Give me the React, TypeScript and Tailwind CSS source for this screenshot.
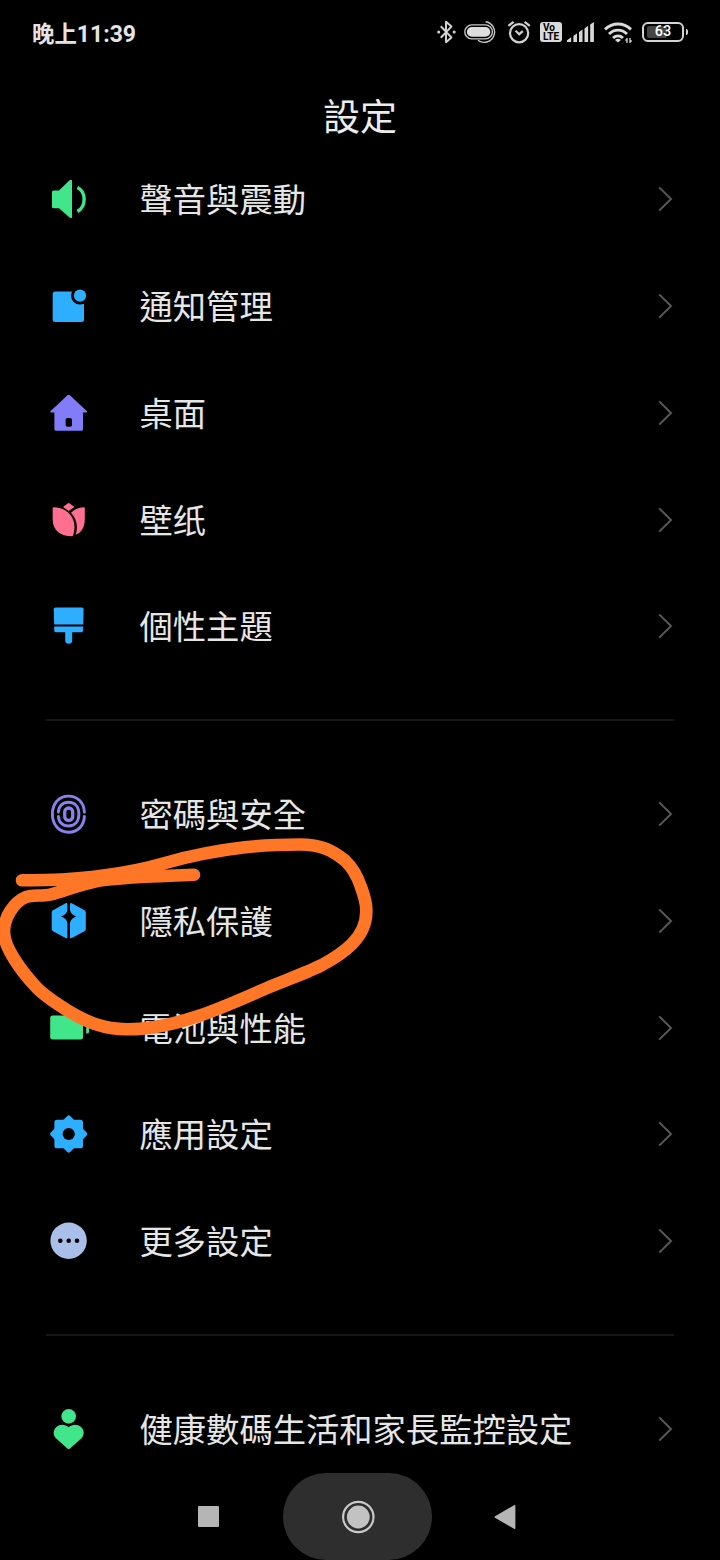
import type { ReactNode } from 'react';

interface SettingItem {
  id: string;
  label: string;
  icon: ReactNode;
}

const GREEN = '#41e58a';
const BLUE = '#2eaeff';
const PURPLE = '#837cf8';

function Icon({ children }: { children: ReactNode }) {
  return (
    <svg viewBox="0 0 44 44" className="w-11 h-11 shrink-0" fill="none" aria-hidden="true">
      {children}
    </svg>
  );
}

const groups: SettingItem[][] = [
  [
    {
      id: 'sound',
      label: '聲音與震動',
      icon: (
        <Icon>
          <path d="M7.5 13.6H13L23.6 3.3Q26 1.7 26 4.1V39.7Q26 42.3 23.6 40.5L13 31.2H7.5Q6 31.2 6 29.7V15.1Q6 13.6 7.5 13.6Z" fill={GREEN} />
          <path d="M31.4 10.5C40.4 14.9 40.4 29.7 31.4 34.5" stroke={GREEN} strokeWidth="3.4" />
        </Icon>
      ),
    },
    {
      id: 'notification',
      label: '通知管理',
      icon: (
        <Icon>
          <rect x="6.7" y="7.6" width="31.3" height="30.4" rx="2.5" fill={BLUE} />
          <circle cx="34" cy="11.6" r="9" fill="#000" />
          <circle cx="34" cy="11.6" r="6.1" fill={BLUE} />
        </Icon>
      ),
    },
    {
      id: 'home',
      label: '桌面',
      icon: (
        <Icon>
          <path d="M21.5 4.2Q22.7 3.2 23.9 4.2L41 20.3Q41.6 21.4 40.4 21.5H37V38.2Q37 39.8 35.4 39.8H10Q8.4 39.8 8.4 38.2V21.5H5Q3.8 21.4 4.4 20.3Z" fill={PURPLE} />
          <rect x="19.6" y="27" width="6.4" height="8.7" rx="1.8" fill="#000" />
        </Icon>
      ),
    },
    {
      id: 'wallpaper',
      label: '壁纸',
      icon: (
        <Icon>
          <g fill="#ff6f8f">
            <path d="M22 5.2Q22.7 4.8 23.4 5.2L27.8 8.4Q28.2 9 27.6 9.5L22.7 13L17.8 9.5Q17.2 9 17.6 8.4Z" />
            <path d="M7.6 9.2C18 9.2 28.5 16.5 28.5 29Q28.5 33 27.2 37.2Q26.8 38.3 25.8 38.3C14.5 38.3 6.7 32 6.7 22V10.2Q6.7 9.2 7.6 9.2Z" />
            <path d="M38 9.2Q38.8 9.2 38.8 10.2V21C38.8 28.5 36 34.5 29.7 36.8C32.4 28.5 30.5 20.5 25 14.8C28.5 11.3 33 9.5 38 9.2Z" />
          </g>
        </Icon>
      ),
    },
    {
      id: 'theme',
      label: '個性主題',
      icon: (
        <Icon>
          <g fill={BLUE}>
            <path d="M9.5 3.5H35.8Q37.6 3.5 37.6 5.3L37.2 20.6H8.2L7.7 5.3Q7.7 3.5 9.5 3.5Z" />
            <path d="M8.2 22.6H37.1V26.6Q37.1 28.2 35.5 28.2H26.2V36.2A3.5 3.5 0 0 1 19.2 36.2V28.2H9.8Q8.2 28.2 8.2 26.6Z" />
          </g>
        </Icon>
      ),
    },
  ],
  [
    {
      id: 'security',
      label: '密碼與安全',
      icon: (
        <Icon>
          <g stroke="#8a80ee" strokeWidth="2.9" strokeLinecap="round">
            <path d="M38.4 20.2C38 10.5 31.5 4.1 22.6 4.1C13.2 4.1 6.4 11.2 6.4 22.1C6.4 33 13.2 40.2 22.6 40.2C31.5 40.2 38 34 38.4 24.4" />
            <path d="M12.4 20.2C12.8 14 16.6 10.2 22.6 10.2C28.8 10.2 32.9 14.6 32.9 22.1C32.9 29.6 28.8 34 22.6 34C16.6 34 12.8 30.4 12.4 24.4" />
            <rect x="18.7" y="16" width="8" height="12.4" rx="4" strokeWidth="3.3" />
          </g>
        </Icon>
      ),
    },
    {
      id: 'privacy',
      label: '隱私保護',
      icon: (
        <Icon>
          <g fill={BLUE}>
            <path d="M19.6 4.3Q21.4 3.6 21.4 5.4V11.5Q20 16 15 17.6Q20 19.2 21.4 23.8V38Q21.4 40 19.6 39.1L7 32.2Q5.7 31.4 5.7 30V13.4Q5.7 12 7 11.2Z" />
            <path d="M25.8 4.3Q24 3.6 24 5.4V11.5Q25.4 16 30.4 17.6Q25.4 19.2 24 23.8V38Q24 40 25.8 39.1L38.5 32.2Q39.8 31.4 39.8 30V13.4Q39.8 12 38.5 11.2Z" />
          </g>
        </Icon>
      ),
    },
    {
      id: 'battery',
      label: '電池與性能',
      icon: (
        <Icon>
          <rect x="4.2" y="9.6" width="32.8" height="24" rx="2.4" fill={GREEN} />
          <path d="M40.2 17.3H41.4Q43 17.3 43 18.8V25.8Q43 27.4 41.4 27.4H40.2Z" fill={GREEN} />
        </Icon>
      ),
    },
    {
      id: 'apps',
      label: '應用設定',
      icon: (
        <Icon>
          <g fill={BLUE}>
            <rect x="8.4" y="7.7" width="28.6" height="28.6" rx="2.6" />
            <rect x="9" y="8.3" width="27.4" height="27.4" rx="2" transform="rotate(45 22.7 22)" />
          </g>
          <circle cx="22.7" cy="22" r="6.1" fill="#000" />
        </Icon>
      ),
    },
    {
      id: 'more',
      label: '更多設定',
      icon: (
        <Icon>
          <circle cx="22.6" cy="21.7" r="18.2" fill="#a9bfe9" />
          <g fill="#000">
            <circle cx="14.3" cy="21.8" r="2.3" />
            <circle cx="22.7" cy="21.8" r="2.3" />
            <circle cx="31" cy="21.8" r="2.3" />
          </g>
        </Icon>
      ),
    },
  ],
  [
    {
      id: 'wellbeing',
      label: '健康數碼生活和家長監控設定',
      icon: (
        <Icon>
          <g fill={GREEN}>
            <circle cx="22.7" cy="9.4" r="7.3" />
            <path d="M22.7 20.2C19.4 17 13.8 16.8 10.4 20C6.8 23.4 6.9 28.2 10.2 31.6L21.4 41.4Q22.7 42.4 24 41.4L35.2 31.6C38.5 28.2 38.6 23.4 35 20C31.6 16.8 26 17 22.7 20.2Z" />
          </g>
        </Icon>
      ),
    },
  ],
];

function StatusBar() {
  return (
    <div className="h-16 shrink-0 flex items-center justify-between px-8 text-[#e4e4e4]">
      <span className="pt-1 font-['Roboto','Noto_Sans_CJK_TC',sans-serif] font-bold text-[23px] leading-none whitespace-nowrap">
        <span className="text-[22.4px]">晚上</span>11:39
      </span>

      <div className="flex items-center" aria-hidden="true">
        {/* Bluetooth */}
        <svg viewBox="0 0 19 24" className="w-[19px] h-6 mr-2" fill="none">
          <path d="M3.8 6.2L14.4 17.4L9 22.2V1.8L14.4 6.6L3.8 17.8" stroke="#d2d2d2" strokeWidth="2" strokeLinejoin="round" />
          <circle cx="1.7" cy="12" r="1.5" fill="#d2d2d2" />
          <circle cx="17.2" cy="12" r="1.5" fill="#d2d2d2" />
        </svg>
        {/* Wearable capsule */}
        <svg viewBox="0 0 33 24" className="w-[33px] h-6 mr-[10px]" fill="none">
          <path d="M21.6 1.8A10.3 10.3 0 1 1 14 20.2" stroke="#c8c8c8" strokeWidth="1.4" />
          <rect x="0.8" y="4.9" width="27.6" height="14" rx="7" fill="#000" stroke="#c8c8c8" strokeWidth="1.4" />
          <rect x="2.9" y="7" width="23.4" height="9.8" rx="4.9" fill="#dedede" />
        </svg>
        {/* Alarm */}
        <svg viewBox="0 0 24 24" className="w-6 h-6 mr-[9px]" fill="none" stroke="#d2d2d2" strokeWidth="2.2">
          <circle cx="12.1" cy="13.2" r="9.1" />
          <path d="M8.6 10.8L12.2 14.2L15.8 11.2" />
          <path d="M1.4 5.8L6.6 1.8M17.6 1.8L22.8 5.8" />
        </svg>
        {/* VoLTE */}
        <div className="w-[22px] h-5 mr-[5px] rounded-[3px] bg-[#dadada] text-black font-['Roboto',sans-serif] font-bold text-[10px] leading-[9px] pt-px pl-[3px]">
          <div>Vo</div>
          <div>LTE</div>
        </div>
        {/* Signal */}
        <svg viewBox="0 0 27 24" className="w-[27px] h-6 mr-[10px]" fill="#d8d8d8">
          <path d="M0 22V20.2L4.2 17.2V22ZM6.4 22V15.8L10 13.4V22ZM12 22V12L15.5 9.6V22ZM17.5 22V8.4L21.1 5.8V22ZM23.2 22V4.6L26.9 2V22Z" />
        </svg>
        {/* Wifi */}
        <svg viewBox="0 0 29 24" className="w-[29px] h-6 mr-[9px]" fill="none" stroke="#dadada" strokeWidth="2.9">
          <path d="M1 9.4C8.6 2.2 19.4 2.2 27 9.4M5 14C10.4 8.8 17.6 8.8 23 14M9 18C12 15.2 16 15.2 19 18" />
          <path d="M11 20Q14 17.6 17 20L14 22.6Z" fill="#dadada" stroke="none" />
          <path d="M23 18V23M21.4 20H23M26 18V23M26 21H27.8" strokeWidth="1.3" />
        </svg>
        {/* Battery level */}
        <div className="flex items-center gap-[1.5px]">
          <div className="relative w-[42px] h-5 border-[2.5px] border-[#d4d4d4] rounded-[6px] flex items-center justify-center">
            <div className="absolute left-[3px] top-[2px] w-[20px] h-3 rounded-[2px] bg-[#454545]" />
            <span className="relative font-['Roboto',sans-serif] font-medium text-[14.5px] leading-none text-white">63</span>
          </div>
          <div className="w-[2.5px] h-[6px] rounded-r-[2px] bg-[#d4d4d4]" />
        </div>
      </div>
    </div>
  );
}

function SettingRow({ item }: { item: SettingItem }) {
  return (
    <button type="button" className="w-full h-[106.75px] pl-[46px] pr-[46px] flex items-center text-left">
      {item.icon}
      <span className="ml-[49.5px] pb-[2.6px] flex-1 text-[33.3px] leading-none whitespace-nowrap text-[#e6e6e6]">{item.label}</span>
      <svg viewBox="0 0 18 28" className="w-[18px] h-7 shrink-0" fill="none" aria-hidden="true">
        <path d="M3.2 2.4L15 14L3.2 25.6" stroke="#585858" strokeWidth="2" />
      </svg>
    </button>
  );
}

function Divider() {
  return (
    <div className="h-[81px] px-[46px] flex items-center">
      <div className="w-full h-[2px] bg-[#171717]" />
    </div>
  );
}

function NavigationBar() {
  return (
    <nav className="h-[87px] shrink-0 flex items-center">
      <button type="button" aria-label="Recents" className="ml-[198px] w-[21px] h-[21px] rounded-[1px] bg-[#b5b5b5]" />
      <button type="button" aria-label="Home" className="ml-16 w-[149px] h-[87px] rounded-full bg-[#2e2e2e] flex items-center justify-center">
        <svg viewBox="0 0 34 34" className="w-[34px] h-[34px]" fill="none">
          <circle cx="17.3" cy="17" r="15.2" stroke="#cacaca" strokeWidth="2.2" />
          <circle cx="17.3" cy="17" r="11.4" fill="#c2c2c2" />
        </svg>
      </button>
      <button type="button" aria-label="Back" className="ml-[62px]">
        <svg viewBox="0 0 22 26" className="w-[22px] h-[26px]" fill="#b5b5b5">
          <path d="M20 1.2Q21.4 .6 21.4 2V24Q21.4 25.4 20 24.8L1 13.8Q0 13 1 12.2Z" />
        </svg>
      </button>
    </nav>
  );
}

// Hand-drawn marker loop around the privacy row
function MarkerStroke() {
  return (
    <svg viewBox="0 0 720 1560" className="absolute inset-0 w-full h-full pointer-events-none" fill="none" aria-hidden="true">
      <path
        d="M22 880.3C50 880.3 76 879.4 100 876C128 872.5 148 868 167 862.5C190 856 222 850 245 847.3C265 845 285 844.5 300 844.5C322 844.5 333 851 345 860.5C353 868 358 878 361 887C365 898 366.6 905 366.3 911C366.5 922 362 934 352 944C346 950 335 958 322 965C306 973 286 980 267 988C243 998.5 222 1008 200 1015.5C178 1023 150 1029.5 127 1029.3C103 1029 87 1022 70 1012C57 1004 46 997 37 988C22 972 4 948 4 932C4 917 14 902 26 897C33 894.5 41 896.4 51 894.3C64 891 78 885 97 881C118 877.5 160 876 194 874.8"
        stroke="#ff7626"
        strokeWidth="12.6"
        strokeLinecap="round"
        strokeLinejoin="round"
      />
    </svg>
  );
}

export default function App() {
  return (
    <div className="relative w-[720px] h-[1560px] overflow-hidden bg-black flex flex-col font-['Noto_Sans_CJK_TC',sans-serif]">
      <StatusBar />
      <header className="h-[82px] shrink-0 pt-[20px] flex items-center justify-center">
        <h1 className="text-[37px] leading-none font-normal text-[#ececec]">設定</h1>
      </header>
      <main className="flex-1 min-h-0 overflow-hidden">
        {groups.map((items, index) => (
          <section key={items[0].id}>
            {index > 0 && <Divider />}
            {items.map((item) => (
              <SettingRow key={item.id} item={item} />
            ))}
          </section>
        ))}
      </main>
      <NavigationBar />
      <MarkerStroke />
    </div>
  );
}
